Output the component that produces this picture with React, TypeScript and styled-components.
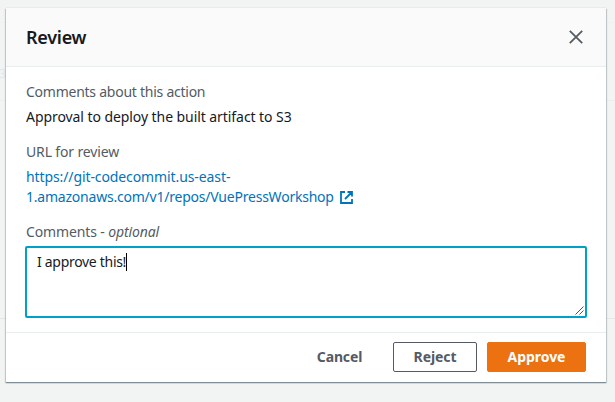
import React from 'react';
import styled, { createGlobalStyle } from 'styled-components';

const GlobalStyle = createGlobalStyle`
  * { box-sizing: border-box; }
  body {
    margin: 0;
    background: #f2f3f3;
    font-family: 'Amazon Ember', 'Noto Sans', 'Open Sans', sans-serif;
    font-size: 14px;
    line-height: 20px;
    color: #16191f;
  }
`;

const Page = styled.main`
  position: relative;
  width: 615px;
  height: 402px;
  padding: 8px 9px 20px 6px;
  overflow: hidden;
`;

const Rule = styled.div<{ $top: number; $color: string }>`
  position: absolute;
  left: 0;
  right: 0;
  top: ${(p) => p.$top}px;
  height: 1px;
  background: ${(p) => p.$color};
`;

const Behind = styled.span`
  position: absolute;
  left: -1px;
  top: 64px;
  font-size: 12px;
  color: #dfe8ef;
`;

const Dialog = styled.section`
  position: relative;
  display: flex;
  flex-direction: column;
  width: 600px;
  height: 374px;
  background: #fff;
  box-shadow: 0 1px 1px 0 #7f8f95, 1px 1px 1px 0 rgba(0, 28, 36, 0.15), -1px 1px 1px 0 rgba(0, 28, 36, 0.15),
    0 -1px 0 0 #e9ebeb;
`;

const Header = styled.header`
  display: flex;
  flex: none;
  align-items: center;
  justify-content: space-between;
  height: 59px;
  padding: 0 23px 0 20px;
  background: #fafafa;
  border-bottom: 1px solid #eaeded;
`;

const Title = styled.h2`
  margin: 0;
  font-size: 18px;
  line-height: 22px;
  font-weight: 600;
  letter-spacing: -0.25px;
`;

const IconButton = styled.button`
  display: flex;
  padding: 0;
  border: 0;
  background: none;
  color: #545b64;
`;

const Body = styled.div`
  display: flex;
  flex-direction: column;
  flex: 1;
  min-height: 0;
  padding: 15px 20px 0;
`;

const Field = styled.div<{ $gap?: number }>`
  display: flex;
  flex: none;
  flex-direction: column;
  gap: ${(p) => p.$gap ?? 5}px;

  & + & {
    margin-top: 15px;
  }
`;

const Line = styled.span<{ $track: number }>`
  display: block;
  white-space: nowrap;
  letter-spacing: ${(p) => p.$track}px;
`;

const Label = styled(Line)`
  color: #545b64;
`;

const Link = styled.a`
  color: #0073bb;
  text-decoration: none;
`;

const LinkRow = styled.span`
  display: flex;
  align-items: center;
  gap: 6px;
`;

const CommentBox = styled.div`
  position: relative;
  width: 562px;
  height: 72px;
  margin-left: -1px;
  padding: 4px 10px;
  border: 2px solid #00a1c9;
  border-radius: 2px;
  display: flex;
  align-items: flex-start;
`;

const Caret = styled.span`
  width: 1px;
  height: 18px;
  margin-top: 1px;
  background: #000;
`;

const Grip = styled.svg`
  position: absolute;
  right: 1px;
  bottom: 1px;
`;

const Footer = styled.footer`
  display: flex;
  flex: none;
  align-items: center;
  justify-content: flex-end;
  gap: 10px;
  height: 50px;
  padding: 0 20px 1px;
  border-top: 1px solid #eaeded;
`;

const Button = styled.button<{ $kind: 'link' | 'normal' | 'primary'; $width: number; $track: number }>`
  width: ${(p) => p.$width}px;
  height: 30px;
  padding: 0;
  border: 1px solid ${(p) => ({ link: 'transparent', normal: '#545b64', primary: '#ec7211' })[p.$kind]};
  border-radius: 2px;
  background: ${(p) => (p.$kind === 'primary' ? '#ec7211' : 'transparent')};
  color: ${(p) => (p.$kind === 'primary' ? '#fff' : '#545b64')};
  font: 700 14px/20px 'Amazon Ember', 'Noto Sans', 'Open Sans', sans-serif;
  letter-spacing: ${(p) => p.$track}px;
`;

export default function App() {
  return (
    <>
      <GlobalStyle />
      <Page>
        <Rule $top={22} $color="#eff1f1" />
        <Rule $top={100} $color="#eceeee" />
        <Rule $top={318} $color="#e4e7e7" />
        <Behind>3</Behind>
        <Dialog role="dialog" aria-label="Review">
          <Header>
            <Title>Review</Title>
            <IconButton aria-label="Close">
              <svg width="14" height="14" viewBox="0 0 14 14" fill="none" stroke="currentColor" strokeWidth="1.8">
                <path d="M0.8 0.8 13.2 13.2M13.2 0.8 0.8 13.2" />
              </svg>
            </IconButton>
          </Header>
          <Body>
            <Field>
              <Label $track={-0.25}>Comments about this action</Label>
              <Line $track={-0.07}>Approval to deploy the built artifact to S3</Line>
            </Field>
            <Field>
              <Label $track={-0.15}>URL for review</Label>
              <Link>
                <Line $track={-0.1}>https://git-codecommit.us-east-</Line>
                <LinkRow>
                  <Line $track={-0.22}>1.amazonaws.com/v1/repos/VuePressWorkshop</Line>
                  <svg width="13" height="13" viewBox="0 0 13 13" fill="none" stroke="currentColor" strokeWidth="1.8">
                    <path d="M5 1H1v11h11V8M7.5 1H12v4.5M12 1 5 8" />
                  </svg>
                </LinkRow>
              </Link>
            </Field>
            <Field $gap={4}>
              <Label $track={-0.13}>
                Comments - <i>optional</i>
              </Label>
              <CommentBox role="textbox" aria-multiline="true">
                <Line $track={-0.3}>I approve this!</Line>
                <Caret />
                <Grip width="9" height="9" viewBox="0 0 9 9" stroke="#555" strokeWidth="1">
                  <path d="M0.5 8.5 8.5 0.5M4.5 8.5 8.5 4.5" />
                </Grip>
              </CommentBox>
            </Field>
          </Body>
          <Footer>
            <Button $kind="link" $width={87} $track={-0.15}>Cancel</Button>
            <Button $kind="normal" $width={84} $track={-0.1}>Reject</Button>
            <Button $kind="primary" $width={99} $track={-0.05}>Approve</Button>
          </Footer>
        </Dialog>
      </Page>
    </>
  );
}
